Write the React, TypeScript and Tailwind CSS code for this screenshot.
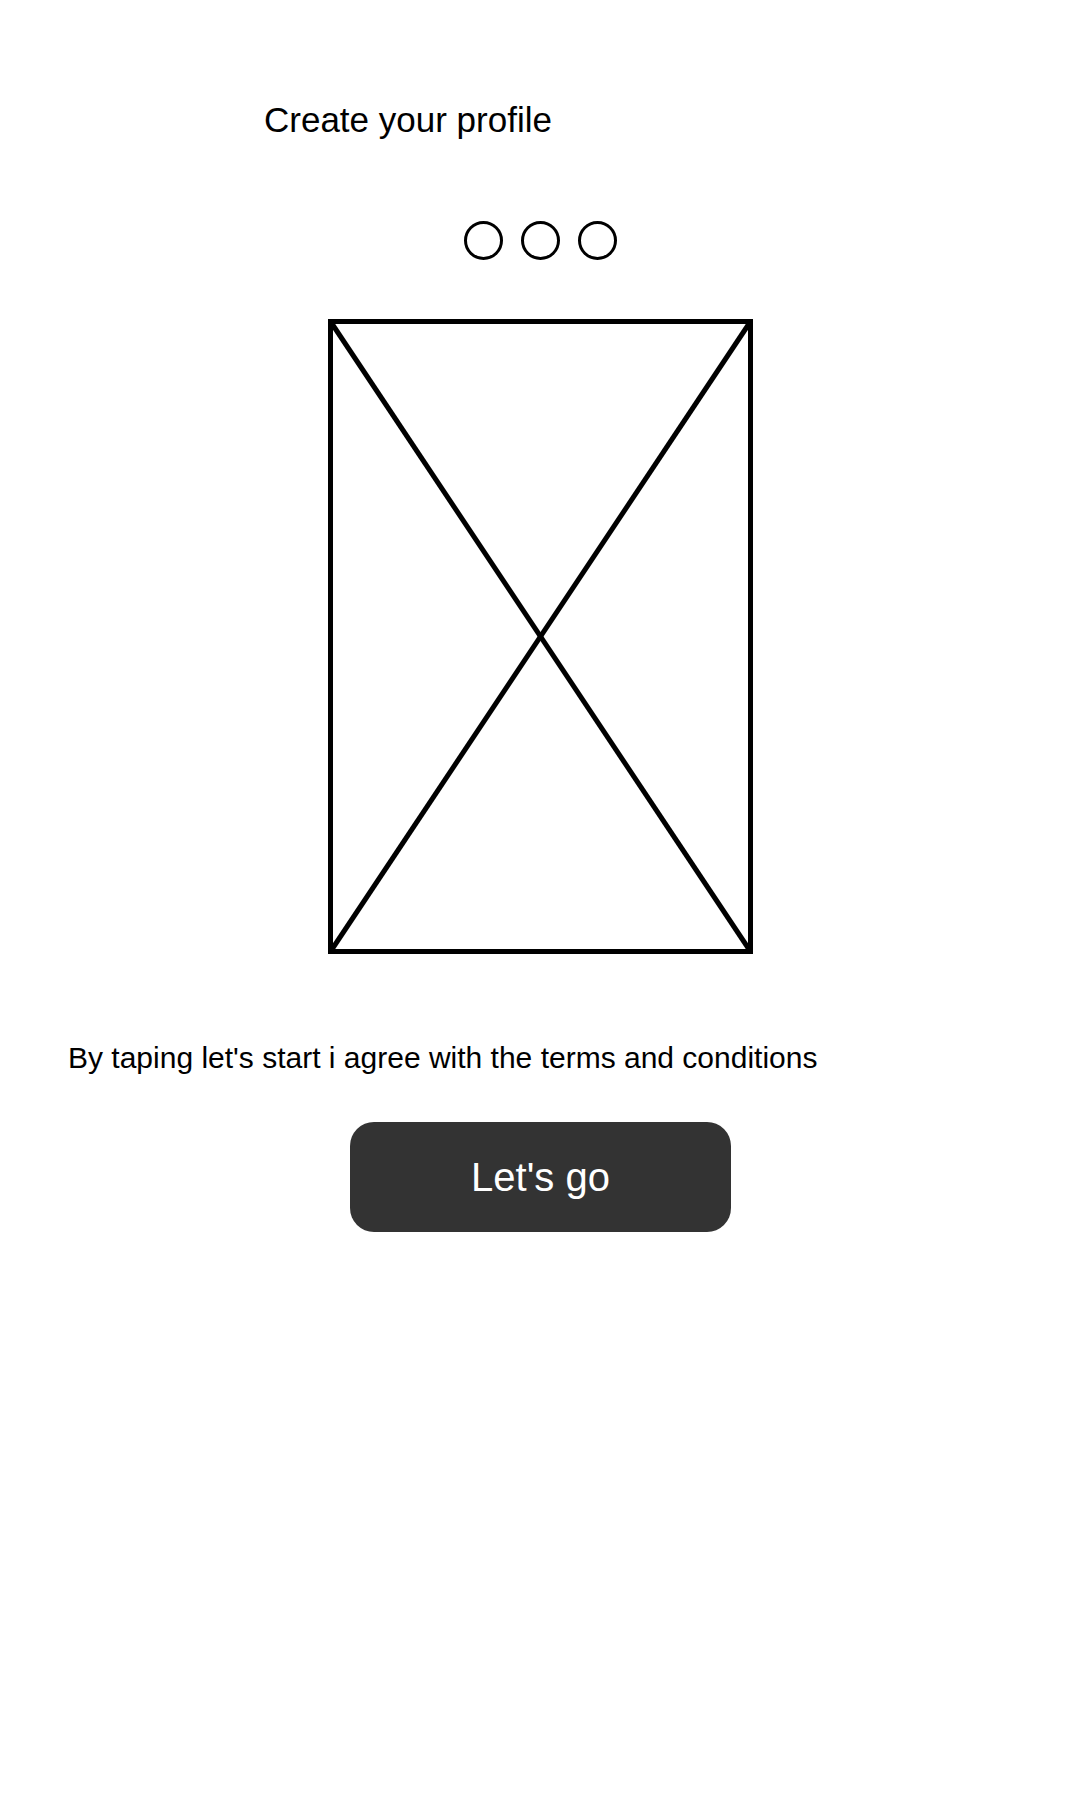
import React from "react";

export default function App() {
  return (
    <div className="w-[1080px] h-[1800px] bg-white text-black flex flex-col" style={{ fontFamily: '"Liberation Sans", Arial, sans-serif' }}>
      <div className="pt-[101px] pl-[264px] text-[35px] leading-[38px]">Create your profile</div>
      <div className="mt-[82px] flex justify-center gap-[18px] pl-px">
        <div className="w-[39px] h-[39px] rounded-full border-[3px] border-black" />
        <div className="w-[39px] h-[39px] rounded-full border-[3px] border-black" />
        <div className="w-[39px] h-[39px] rounded-full border-[3px] border-black" />
      </div>
      <div className="mt-[59px] flex justify-center pl-px">
        <svg width="425" height="635" viewBox="0 0 425 635">
          <rect x="2.5" y="2.5" width="420" height="630" fill="none" stroke="#000" strokeWidth="5" />
          <line x1="2.5" y1="2.5" x2="422.5" y2="632.5" stroke="#000" strokeWidth="5" />
          <line x1="422.5" y1="2.5" x2="2.5" y2="632.5" stroke="#000" strokeWidth="5" />
        </svg>
      </div>
      <div className="mt-[87px] pl-[68px] text-[30px] leading-[34px]">By taping let's start i agree with the terms and conditions</div>
      <div className="mt-[47px] flex justify-center pl-px">
        <button className="w-[381px] h-[110px] rounded-[24px] bg-[#333333] text-white text-[40px] flex items-center justify-center">Let's go</button>
      </div>
    </div>
  );
}
